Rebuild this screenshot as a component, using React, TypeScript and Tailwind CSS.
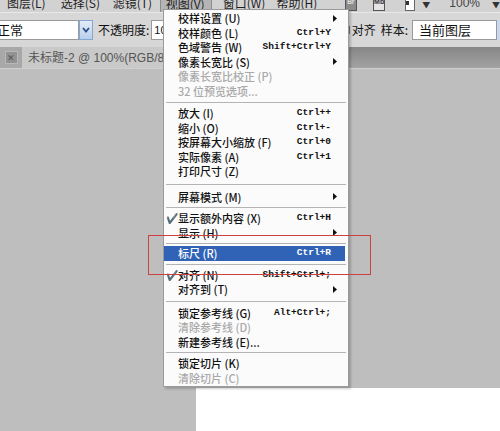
import React from 'react';

type Item =
  | { sep: number }
  | { label: string; keys?: string; sub?: boolean; disabled?: boolean; checked?: boolean; active?: boolean };

const cjk = '"Noto Sans CJK SC", "Noto Sans", sans-serif';

// 视图 menu entries, separators carry their own height
const items: Item[] = [
  { label: '校样设置 (U)', sub: true },
  { label: '校样颜色 (L)', keys: 'Ctrl+Y' },
  { label: '色域警告 (W)', keys: 'Shift+Ctrl+Y' },
  { label: '像素长宽比 (S)', sub: true },
  { label: '像素长宽比校正 (P)', disabled: true },
  { label: '32 位预览选项...', disabled: true },
  { sep: 8 },
  { label: '放大 (I)', keys: 'Ctrl++' },
  { label: '缩小 (O)', keys: 'Ctrl+-' },
  { label: '按屏幕大小缩放 (F)', keys: 'Ctrl+0' },
  { label: '实际像素 (A)', keys: 'Ctrl+1' },
  { label: '打印尺寸 (Z)' },
  { sep: 11 },
  { label: '屏幕模式 (M)', sub: true },
  { sep: 7 },
  { label: '显示额外内容 (X)', keys: 'Ctrl+H', checked: true },
  { label: '显示 (H)', sub: true },
  { sep: 6 },
  { label: '标尺 (R)', keys: 'Ctrl+R', active: true },
  { sep: 7 },
  { label: '对齐 (N)', keys: 'Shift+Ctrl+;', checked: true },
  { label: '对齐到 (T)', sub: true },
  { sep: 9 },
  { label: '锁定参考线 (G)', keys: 'Alt+Ctrl+;' },
  { label: '清除参考线 (D)', disabled: true },
  { label: '新建参考线 (E)...' },
  { sep: 7 },
  { label: '锁定切片 (K)' },
  { label: '清除切片 (C)', disabled: true },
];

const Arrow = () => (
  <svg width="4" height="7" viewBox="0 0 4 7" className="shrink-0">
    <path d="M0 0 L4 3.5 L0 7 Z" fill="#111" />
  </svg>
);

const ViewMenu = () => (
  <div className="absolute left-[163px] top-[9px] w-[186px] bg-[#fbfbfb] border border-[#9a9a9a] pt-[1px] pb-[1px] shadow-[2px_2px_2px_rgba(0,0,0,0.2)]">
    {items.map((it, i) => {
      if ('sep' in it) {
        const h = it.sep;
        return (
          <div key={i} className="flex items-center px-[2px]" style={{ height: h }}>
            <div className="h-px w-full bg-[#b4b4b4]" />
          </div>
        );
      }
      const color = it.active ? 'text-white' : it.disabled ? 'text-[#a9a9a9]' : 'text-[#111]';
      return (
        <div
          key={i}
          className={`relative flex items-center h-[14.5px] pl-[14px] mr-[3px] ${it.active ? 'bg-[#3063b6]' : ''} ${color}`}
        >
          {it.checked && (
            <span className="absolute left-[2px] top-0 text-[10px] leading-[14px]">✔</span>
          )}
          <span className="text-[11px] leading-[12px] font-medium whitespace-nowrap" style={{ fontFamily: cjk }}>
            {it.label}
          </span>
          <span className="flex-1" />
          {it.keys && (
            <span className="text-[9.5px] leading-[12px] font-bold mr-[14px] whitespace-nowrap font-['Liberation_Mono',monospace]">
              {it.keys}
            </span>
          )}
          {it.sub && (
            <span className="mr-[8px]">
              <Arrow />
            </span>
          )}
        </div>
      );
    })}
  </div>
);

const MenuBar = () => (
  <div className="h-[12px] bg-[#d2d2d2] overflow-hidden relative">
    <div className="flex items-center h-[16px] -mt-[5px] pl-[7px] text-[12px] text-[#1e1e1e]" style={{ fontFamily: cjk }}>
      <div className="w-[55px]">图层(L)</div>
      <div className="w-[53px]">选择(S)</div>
      <div className="w-[48px]">滤镜(T)</div>
      <div className="w-[53px] h-[17px] mt-[1px] pl-[5px] bg-[#b5b5b5] border-x border-[#8c8c8c] flex items-center">视图(V)</div>
      <div className="w-[55px] ml-[11px]">窗口(W)</div>
      <div className="w-[70px]">帮助(H)</div>
      <div className="w-[12px] h-[14px] mt-[1px] bg-[#8b8b8b] border border-[#555] text-[7px] text-white flex items-end justify-center leading-none pb-[5px] font-['Liberation_Sans',sans-serif]">Br</div>
      <div className="w-[13px] h-[14px] ml-[16px] mt-[1px] bg-[#e4e4e4] border border-[#555] text-[7px] text-[#333] flex items-end justify-center leading-none pb-[5px] font-['Liberation_Sans',sans-serif] font-bold">Mb</div>
      <div className="w-[10px] h-[14px] ml-[20px] mt-[1px] bg-white border border-[#666] flex items-end pb-[5px]">
        <div className="w-[3px] h-[4px] bg-[#333]" />
      </div>
      <div className="ml-[7px] mt-[3px] text-[8px] text-[#333]">▼</div>
      <div className="ml-[19px] text-[12px] text-[#444] font-['Liberation_Sans',sans-serif]">100%</div>
      <div className="ml-[12px] mt-[3px] text-[8px] text-[#333]">▼</div>
    </div>
  </div>
);

const OptionsBar = () => (
  <div className="h-[35px] bg-[#d7d7d7] border-t border-[#e8e8e8] flex items-center text-[12px] text-[#111]" style={{ fontFamily: cjk }}>
    <div className="w-[79px] h-[20px] bg-white border border-[#9a9a9a] border-l-0 flex items-center overflow-hidden">
      <span className="-ml-[3px] text-[13px]">正常</span>
    </div>
    <div className="w-[14px] h-[20px] bg-gradient-to-b from-[#e3ecf8] to-[#b9cfec] border border-[#86a6d4] flex items-center justify-center">
      <svg width="8" height="6" viewBox="0 0 8 6">
        <path d="M1 1 L4 4.5 L7 1" stroke="#2c4f8c" strokeWidth="1.8" fill="none" />
      </svg>
    </div>
    <span className="ml-[5px]">不透明度:</span>
    <div className="ml-[2px] w-[30px] h-[20px] bg-white border border-[#9a9a9a] flex items-center pl-[2px] text-[11px] font-['Liberation_Sans',sans-serif]">
      <span className="w-[14px] overflow-hidden whitespace-nowrap">100%</span>
    </div>
    <div className="flex-1" />
    <div className="w-[8px] h-[8px] bg-white border border-[#6f6f6f] flex items-center justify-center">
      <svg width="6" height="6" viewBox="0 0 6 6">
        <path d="M1 3 L2.5 4.5 L5 1" stroke="#2f8a2f" strokeWidth="1.2" fill="none" />
      </svg>
    </div>
    <span className="ml-[2px]">对齐</span>
    <span className="ml-[5px]">样本:</span>
    <div className="ml-[4px] w-[85px] h-[20px] bg-white border border-[#9a9a9a] flex items-center pl-[6px] text-[13px]">
      当前图层
    </div>
    <div className="w-[3px] h-[20px] bg-[#c9d8ee]" />
  </div>
);

const TabBar = () => (
  <div className="h-[21px] bg-gradient-to-b from-[#868686] to-[#a3a3a3] flex items-stretch">
    <div className="w-[22px] bg-[#a8a8a8] flex items-center justify-center">
      <div className="w-[13px] h-[13px] bg-[#929292] border border-[#b8b8b8] flex items-center justify-center text-[9px] text-[#555] leading-none">
        ✕
      </div>
    </div>
    <div
      className="w-[180px] bg-[#c9c9c9] flex items-center pl-[6px] text-[12px] text-[#555] whitespace-nowrap"
      style={{ fontFamily: '"Liberation Sans", "Noto Sans CJK SC", sans-serif' }}
    >
      未标题-2 @ 100%(RGB/8)
    </div>
  </div>
);

export default function App() {
  return (
    <div className="relative w-[500px] h-[431px] overflow-hidden bg-[#bdbdbd] flex flex-col">
      <MenuBar />
      <OptionsBar />
      <TabBar />
      <div className="flex-1 bg-[#bebebe] flex flex-col border-t border-[#d0d0d0]">
        <div className="flex-1" />
        <div className="h-[43px] ml-[196px] bg-white" />
      </div>
      <ViewMenu />
      <div className="absolute left-[148px] top-[235px] w-[223px] h-[40px] border-[1.5px] border-[#c9423f]" />
    </div>
  );
}
